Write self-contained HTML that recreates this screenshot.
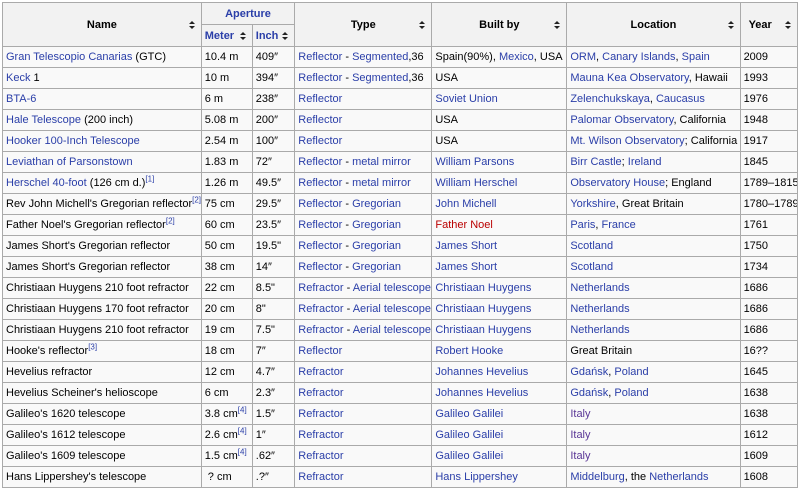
<!DOCTYPE html><html><head><style>
body{margin:0;background:#fff;}
table{position:absolute;left:2px;top:2px;width:796px;border-collapse:collapse;table-layout:fixed;font-family:"Liberation Sans",Arial,sans-serif;font-size:11px;color:#000;background:#f9f9f9;}
td,th{border:1px solid #aaa;padding:0 3px;height:20px;white-space:nowrap;overflow:hidden;text-align:left;}
th{background:#f2f2f2;font-weight:bold;text-align:center;position:relative;height:21px;}
th.s:after{content:"";position:absolute;right:6px;top:50%;margin-top:-4px;width:0;height:0;border-left:3px solid transparent;border-right:3px solid transparent;border-bottom:3px solid #222;}
th.s:before{content:"";position:absolute;right:6px;top:50%;margin-top:1px;width:0;height:0;border-left:3px solid transparent;border-right:3px solid transparent;border-top:3px solid #222;}
a{color:#2a3ea8;}
.r{color:#ba0000}.v{color:#5a3696}
sup{font-size:8px;color:#2a3ea8;line-height:0}
th a{color:#2a3ea8}
</style></head><body>
<table>
<colgroup><col style="width:187px"><col style="width:48px"><col style="width:40px"><col style="width:129px"><col style="width:127px"><col style="width:163px"><col style="width:54px"></colgroup>
<tr><th rowspan=2 class=s>Name</th><th colspan=2><a>Aperture</a></th><th rowspan=2 class=s>Type</th><th rowspan=2 class=s>Built by</th><th rowspan=2 class=s>Location</th><th rowspan=2 class=s style="text-align:left;padding-left:8px">Year</th></tr>
<tr><th class=s style="text-align:left"><a>Meter</a></th><th class=s style="text-align:left"><a>Inch</a></th></tr>
<tr><td><a>Gran Telescopio Canarias</a> (GTC)</td><td>10.4 m</td><td>409″</td><td><a>Reflector</a> - <a>Segmented</a>,36</td><td>Spain(90%), <a>Mexico</a>, USA</td><td><a>ORM</a>, <a>Canary Islands</a>, <a>Spain</a></td><td>2009</td></tr>
<tr><td><a>Keck</a> 1</td><td>10 m</td><td>394″</td><td><a>Reflector</a> - <a>Segmented</a>,36</td><td>USA</td><td><a>Mauna Kea Observatory</a>, Hawaii</td><td>1993</td></tr>
<tr><td><a>BTA-6</a></td><td>6 m</td><td>238″</td><td><a>Reflector</a></td><td><a>Soviet Union</a></td><td><a>Zelenchukskaya</a>, <a>Caucasus</a></td><td>1976</td></tr>
<tr><td><a>Hale Telescope</a> (200 inch)</td><td>5.08 m</td><td>200″</td><td><a>Reflector</a></td><td>USA</td><td><a>Palomar Observatory</a>, California</td><td>1948</td></tr>
<tr><td><a>Hooker 100-Inch Telescope</a></td><td>2.54 m</td><td>100″</td><td><a>Reflector</a></td><td>USA</td><td><a>Mt. Wilson Observatory</a>; California</td><td>1917</td></tr>
<tr><td><a>Leviathan of Parsonstown</a></td><td>1.83 m</td><td>72″</td><td><a>Reflector</a> - <a>metal mirror</a></td><td><a>William Parsons</a></td><td><a>Birr Castle</a>; <a>Ireland</a></td><td>1845</td></tr>
<tr><td><a>Herschel 40-foot</a> (126 cm d.)<sup>[1]</sup></td><td>1.26 m</td><td>49.5″</td><td><a>Reflector</a> - <a>metal mirror</a></td><td><a>William Herschel</a></td><td><a>Observatory House</a>; England</td><td>1789–1815</td></tr>
<tr><td>Rev John Michell's Gregorian reflector<sup>[2]</sup></td><td>75 cm</td><td>29.5″</td><td><a>Reflector</a> - <a>Gregorian</a></td><td><a>John Michell</a></td><td><a>Yorkshire</a>, Great Britain</td><td>1780–1789</td></tr>
<tr><td>Father Noel's Gregorian reflector<sup>[2]</sup></td><td>60 cm</td><td>23.5″</td><td><a>Reflector</a> - <a>Gregorian</a></td><td class=r>Father Noel</td><td><a>Paris</a>, <a>France</a></td><td>1761</td></tr>
<tr><td>James Short's Gregorian reflector</td><td>50 cm</td><td>19.5"</td><td><a>Reflector</a> - <a>Gregorian</a></td><td><a>James Short</a></td><td><a>Scotland</a></td><td>1750</td></tr>
<tr><td>James Short's Gregorian reflector</td><td>38 cm</td><td>14″</td><td><a>Reflector</a> - <a>Gregorian</a></td><td><a>James Short</a></td><td><a>Scotland</a></td><td>1734</td></tr>
<tr><td>Christiaan Huygens 210 foot refractor</td><td>22 cm</td><td>8.5"</td><td><a>Refractor</a> - <a>Aerial telescope</a></td><td><a>Christiaan Huygens</a></td><td><a>Netherlands</a></td><td>1686</td></tr>
<tr><td>Christiaan Huygens 170 foot refractor</td><td>20 cm</td><td>8"</td><td><a>Refractor</a> - <a>Aerial telescope</a></td><td><a>Christiaan Huygens</a></td><td><a>Netherlands</a></td><td>1686</td></tr>
<tr><td>Christiaan Huygens 210 foot refractor</td><td>19 cm</td><td>7.5"</td><td><a>Refractor</a> - <a>Aerial telescope</a></td><td><a>Christiaan Huygens</a></td><td><a>Netherlands</a></td><td>1686</td></tr>
<tr><td>Hooke's reflector<sup>[3]</sup></td><td>18 cm</td><td>7″</td><td><a>Reflector</a></td><td><a>Robert Hooke</a></td><td>Great Britain</td><td>16??</td></tr>
<tr><td>Hevelius refractor</td><td>12 cm</td><td>4.7″</td><td><a>Refractor</a></td><td><a>Johannes Hevelius</a></td><td><a>Gdańsk</a>, <a>Poland</a></td><td>1645</td></tr>
<tr><td>Hevelius Scheiner's helioscope</td><td>6 cm</td><td>2.3″</td><td><a>Refractor</a></td><td><a>Johannes Hevelius</a></td><td><a>Gdańsk</a>, <a>Poland</a></td><td>1638</td></tr>
<tr><td>Galileo's 1620 telescope</td><td>3.8 cm<sup>[4]</sup></td><td>1.5″</td><td><a>Refractor</a></td><td><a>Galileo Galilei</a></td><td class=v>Italy</td><td>1638</td></tr>
<tr><td>Galileo's 1612 telescope</td><td>2.6 cm<sup>[4]</sup></td><td>1″</td><td><a>Refractor</a></td><td><a>Galileo Galilei</a></td><td class=v>Italy</td><td>1612</td></tr>
<tr><td>Galileo's 1609 telescope</td><td>1.5 cm<sup>[4]</sup></td><td>.62″</td><td><a>Refractor</a></td><td><a>Galileo Galilei</a></td><td class=v>Italy</td><td>1609</td></tr>
<tr><td>Hans Lippershey's telescope</td><td>&nbsp;? cm</td><td>.?″</td><td><a>Refractor</a></td><td><a>Hans Lippershey</a></td><td><a>Middelburg</a>, the <a>Netherlands</a></td><td>1608</td></tr>
</table>
</body></html>
